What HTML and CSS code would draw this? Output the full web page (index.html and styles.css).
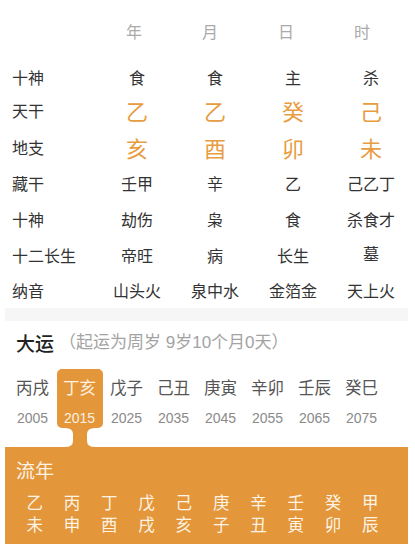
FILE: index.html
```html
<!DOCTYPE html>
<html lang="zh">
<head>
<meta charset="utf-8">
<link rel="stylesheet" href="styles.css">
</head>
<body>
<div class="page">
  <div class="head">
    <span class="hcell">年</span><span class="hcell">月</span><span class="hcell">日</span><span class="hcell">时</span>
  </div>
  <div class="chart">
    <div class="lbl">十神</div><div class="v">食</div><div class="v">食</div><div class="v">主</div><div class="v">杀</div>
    <div class="lbl">天干</div><div class="v big">乙</div><div class="v big">乙</div><div class="v big">癸</div><div class="v big">己</div>
    <div class="lbl">地支</div><div class="v big">亥</div><div class="v big">酉</div><div class="v big">卯</div><div class="v big">未</div>
    <div class="lbl">藏干</div><div class="v">壬甲</div><div class="v">辛</div><div class="v">乙</div><div class="v">己乙丁</div>
    <div class="lbl">十神</div><div class="v">劫伤</div><div class="v">枭</div><div class="v">食</div><div class="v">杀食才</div>
    <div class="lbl">十二长生</div><div class="v">帝旺</div><div class="v">病</div><div class="v">长生</div><div class="v up">墓</div>
    <div class="lbl">纳音</div><div class="v">山头火</div><div class="v">泉中水</div><div class="v">金箔金</div><div class="v">天上火</div>
  </div>
  <div class="band"></div>
  <div class="dy-title"><span class="dy-name">大运</span><span class="dy-sub">（起运为周岁 9岁10个月0天）</span></div>
  <div class="dy-row">
    <div class="dy-item"><div class="gz">丙戌</div><div class="yr">2005</div></div>
    <div class="dy-sel">
      <div class="dy-item on"><div class="gz">丁亥</div><div class="yr">2015</div></div>
      <svg class="neck" width="30" height="19" viewBox="0 0 30 19"><path d="M0 0H30Q22 0 22 6V13Q22 19 30 19H0Q8 19 8 13V6Q8 0 0 0Z" fill="#E3963A"/></svg>
    </div>
    <div class="dy-item"><div class="gz">戊子</div><div class="yr">2025</div></div>
    <div class="dy-item"><div class="gz">己丑</div><div class="yr">2035</div></div>
    <div class="dy-item"><div class="gz">庚寅</div><div class="yr">2045</div></div>
    <div class="dy-item"><div class="gz">辛卯</div><div class="yr">2055</div></div>
    <div class="dy-item"><div class="gz">壬辰</div><div class="yr">2065</div></div>
    <div class="dy-item"><div class="gz">癸巳</div><div class="yr">2075</div></div>
  </div>
  <div class="ln">
    <div class="ln-title">流年</div>
    <div class="ln-grid">
      <div>乙<br>未</div><div>丙<br>申</div><div>丁<br>酉</div><div>戊<br>戌</div><div>己<br>亥</div>
      <div>庚<br>子</div><div>辛<br>丑</div><div>壬<br>寅</div><div>癸<br>卯</div><div>甲<br>辰</div>
    </div>
  </div>
</div>
</body>
</html>
```

FILE: styles.css
```css
html, body {
  margin: 0;
  padding: 0;
  background: #fff;
}
body {
  font-family: "Noto Sans CJK SC", "Noto Sans", sans-serif;
  color: #333;
}
.page {
  margin-left: 5px;
  width: 403px;
}
.head {
  display: flex;
  height: 62px;
  align-items: center;
  padding-left: 91px;
}
.hcell {
  width: 76px;
  text-align: center;
  font-size: 16px;
  color: #aaa;
}
.chart {
  display: grid;
  grid-template-columns: 86px repeat(4, 78px);
  grid-template-rows: 30px 36px 38px 34px 38px 34px 36px;
  padding-left: 7px;
  align-items: center;
  font-size: 16px;
  line-height: 20px;
}
.lbl {
  color: #333;
}
.v {
  text-align: center;
  color: #333;
}
.v.big {
  font-size: 22px;
  line-height: 26px;
  color: #E89C42;
}
.v.up {
  margin-top: -4px;
}
.band {
  height: 13px;
  background: #f6f6f6;
}
.dy-title {
  padding: 12px 0 0 11px;
  height: 20px;
  line-height: 20px;
  display: flex;
  align-items: center;
}
.dy-name {
  font-size: 19px;
  font-weight: 500;
  color: #222;
}
.dy-sub {
  font-family: "Liberation Sans", "Noto Sans CJK SC", sans-serif;
  font-size: 17px;
  color: #a3a3a3;
  margin-left: 5px;
}
.dy-row {
  display: flex;
  align-items: flex-start;
  margin-top: 16px;
  padding-left: 4px;
}
.dy-item {
  width: 47px;
  height: 59px;
  box-sizing: border-box;
  padding-top: 7px;
  text-align: center;
}
.gz {
  font-size: 16.5px;
  line-height: 22px;
  color: #555;
}
.yr {
  margin-top: 10px;
  font-family: "Liberation Sans", sans-serif;
  font-size: 14px;
  line-height: 20px;
  color: #8a8a8a;
}
.dy-sel {
  display: flex;
  flex-direction: column;
  align-items: center;
  width: 47px;
}
.dy-item.on {
  width: 46px;
  background: #E3963A;
  border-radius: 5px;
}
.dy-item.on .gz,
.dy-item.on .yr {
  color: #fdf1e0;
}
.neck {
  display: block;
}
.ln {
  background: #E3963A;
  height: 97px;
  box-sizing: border-box;
  padding: 13px 0 0 11px;
  color: #fdf3e4;
}
.ln-title {
  font-size: 19px;
  line-height: 20px;
}
.ln-grid {
  display: grid;
  grid-template-columns: repeat(10, 37.3px);
  margin-top: 11px;
  font-size: 16.5px;
  line-height: 22px;
  text-align: center;
}
```
